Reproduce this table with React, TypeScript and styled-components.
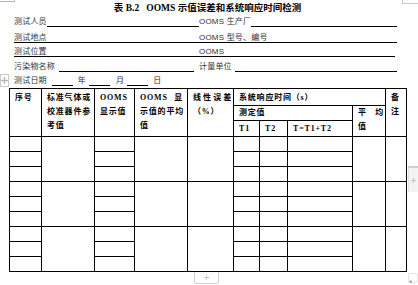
import React from 'react';
import styled, { createGlobalStyle } from 'styled-components';

const GlobalStyle = createGlobalStyle`
  html, body {
    margin: 0;
    padding: 0;
    background: #fff;
  }
  body {
    font-family: "Liberation Serif", "Noto Sans CJK SC", serif;
    color: #000;
    overflow: hidden;
  }
`;

const Page = styled.div`
  position: relative;
  width: 418px;
  height: 285px;
  padding-top: 3px;
  box-sizing: border-box;
  overflow: hidden;
`;

const Title = styled.h1`
  margin: 0;
  padding-right: 3px;
  height: 10px;
  font-size: 9.5px;
  line-height: 10px;
  font-weight: bold;
  text-align: center;
  white-space: pre;
  font-family: "Liberation Serif", "Noto Sans CJK SC", serif;
`;

const Form = styled.div`
  margin-left: 14px;
  display: grid;
  grid-template-columns: 185px 198px;
  grid-template-rows: 14px 16px 14px 15px 14px;
`;

const Field = styled.div<{ $right?: number; $wide?: boolean }>`
  display: flex;
  align-items: flex-end;
  margin-right: ${(p) => p.$right ?? 0}px;
  grid-column: ${(p) => (p.$wide ? '1 / 3' : 'auto')};
`;

const Label = styled.span<{ $lined?: boolean; $gap?: number; $lead?: number }>`
  font-family: "Liberation Sans", "Noto Sans CJK SC", sans-serif;
  font-size: 8px;
  line-height: 9px;
  letter-spacing: 0.2px;
  color: #333;
  white-space: pre;
  margin-left: ${(p) => p.$lead ?? 0}px;
  margin-right: ${(p) => p.$gap ?? 0}px;
  border-bottom: 1px solid ${(p) => (p.$lined ? '#000' : 'transparent')};
`;

const Blank = styled.span<{ $w?: number }>`
  flex: ${(p) => (p.$w ? `0 0 ${p.$w}px` : '1')};
  border-bottom: 1px solid #000;
`;

const Grid = styled.table`
  margin: 2px 0 0 9px;
  border-collapse: collapse;
  table-layout: fixed;
  width: 398px;
`;

const Row = styled.tr<{ $h: number }>`
  height: ${(p) => p.$h}px;
`;

const Cell = styled.td<{ $pt?: number; $pr?: number }>`
  border: 1px solid #000;
  padding: ${(p) => p.$pt ?? 0}px ${(p) => p.$pr ?? 0}px 0 5px;
  vertical-align: top;
  font-size: 8px;
  line-height: 14px;
  font-weight: bold;
  letter-spacing: 0.8px;
  white-space: nowrap;
  overflow: hidden;
`;

const Spread = styled.div`
  display: flex;
  justify-content: space-between;
`;

const Mark = styled.div<{ $x: number; $y: number; $w: number; $h: number }>`
  position: absolute;
  left: ${(p) => p.$x}px;
  top: ${(p) => p.$y}px;
  width: ${(p) => p.$w}px;
  height: ${(p) => p.$h}px;
  box-sizing: border-box;
`;

const CornerLeft = styled(Mark)`
  border-right: 1px solid #b5b5b5;
  border-bottom: 1px solid #b5b5b5;
`;

const CornerRight = styled(Mark)`
  border-left: 1px solid #c8c8c8;
  border-bottom: 1px solid #c8c8c8;
`;

const MoveHandle = styled(Mark)`
  border: 1px solid #c9c9c9;
  background: #fff;
  display: flex;
  align-items: center;
  justify-content: center;
`;

const SideAdd = styled(Mark)`
  background: #f3f3f3;
  border-top: 2px solid #cfcfcf;
  border-left: 1px solid #e4e4e4;
  display: flex;
  align-items: center;
  justify-content: center;
  color: #c0c0c0;
  font: 10px "Liberation Sans", sans-serif;
`;

const BottomAdd = styled(Mark)`
  border: 1px solid #d2d2d2;
  border-top: none;
  border-radius: 0 0 3px 3px;
  display: flex;
  align-items: center;
  justify-content: center;
  color: #c0c0c0;
  font: 10px "Liberation Sans", sans-serif;
`;

const Resize = styled(Mark)`
  border: 1px solid #e6e6e6;
  border-radius: 2px;
`;

const cols = [32, 53, 40, 53, 46, 26, 28, 65, 33, 21];

function BodyGroup() {
  return (
    <>
      <Row $h={15}>
        <Cell />
        <Cell rowSpan={3} />
        <Cell />
        <Cell rowSpan={3} />
        <Cell rowSpan={3} />
        <Cell />
        <Cell />
        <Cell />
        <Cell rowSpan={3} />
        <Cell rowSpan={3} />
      </Row>
      {[0, 1].map((i) => (
        <Row $h={15} key={i}>
          <Cell />
          <Cell />
          <Cell />
          <Cell />
          <Cell />
        </Row>
      ))}
    </>
  );
}

export default function App() {
  return (
    <Page>
      <GlobalStyle />
      <Title>{'表 B.2   OOMS 示值误差和系统响应时间检测'}</Title>

      <Form>
        <Field>
          <Label>测试人员</Label>
          <Blank />
        </Field>
        <Field>
          <Label>OOMS 生产厂</Label>
          <Blank />
        </Field>

        <Field>
          <Label $lined>测试地点</Label>
          <Blank />
        </Field>
        <Field>
          <Label $lined>OOMS 型号、编号</Label>
          <Blank />
        </Field>

        <Field>
          <Label $lined>测试位置</Label>
          <Blank />
        </Field>
        <Field $right={2}>
          <Label $lined>OOMS</Label>
          <Blank />
        </Field>

        <Field $right={5}>
          <Label $gap={4}>污染物名称</Label>
          <Blank />
        </Field>
        <Field>
          <Label $gap={3}>计量单位</Label>
          <Blank />
        </Field>

        <Field $wide>
          <Label $gap={5}>测试日期</Label>
          <Blank $w={21} />
          <Label $lead={5} $gap={3}>年</Label>
          <Blank $w={21} />
          <Label $lead={6} $gap={3}>月</Label>
          <Blank $w={21} />
          <Label $lead={5}>日</Label>
        </Field>
      </Form>

      <Grid>
        <colgroup>
          {cols.map((w, i) => (
            <col key={i} style={{ width: w }} />
          ))}
        </colgroup>
        <tbody>
          <Row $h={17}>
            <Cell rowSpan={3} $pt={2}>序号</Cell>
            <Cell rowSpan={3} $pt={2}>
              标准气体或
              <br />
              校准器件参
              <br />
              考值
            </Cell>
            <Cell rowSpan={3} $pt={2}>
              OOMS
              <br />
              显示值
            </Cell>
            <Cell rowSpan={3} $pt={2} $pr={4}>
              <Spread>
                <span>OOMS</span>
                <span>显</span>
              </Spread>
              示值的平均
              <br />
              值
            </Cell>
            <Cell rowSpan={3} $pt={2} $pr={1}>
              <Spread>
                <span>线</span>
                <span>性</span>
                <span>误</span>
                <span>差</span>
              </Spread>
              （%）
            </Cell>
            <Cell colSpan={4} $pt={2}>系统响应时间（s）</Cell>
            <Cell rowSpan={3} $pt={2}>
              备
              <br />
              注
            </Cell>
          </Row>
          <Row $h={14}>
            <Cell colSpan={3}>测定值</Cell>
            <Cell rowSpan={2} $pr={1}>
              <Spread>
                <span>平</span>
                <span>均</span>
              </Spread>
              值
            </Cell>
          </Row>
          <Row $h={16}>
            <Cell $pt={1}>T1</Cell>
            <Cell $pt={1}>T2</Cell>
            <Cell $pt={1}>T=T1+T2</Cell>
          </Row>
          <BodyGroup />
          <BodyGroup />
          <BodyGroup />
        </tbody>
      </Grid>

      <CornerLeft $x={0} $y={0} $w={15} $h={2} />
      <CornerRight $x={402} $y={0} $w={16} $h={4} />
      <MoveHandle $x={0} $y={74} $w={9} $h={13}>
        <svg width="7" height="7" viewBox="0 0 14 14" fill="none" stroke="#9a9a9a" strokeWidth="1.4">
          <path d="M7 1v12M1 7h12M5 3l2-2 2 2M5 11l2 2 2-2M3 5L1 7l2 2M11 5l2 2-2 2" />
        </svg>
      </MoveHandle>
      <SideAdd $x={408} $y={166} $w={10} $h={26}>+</SideAdd>
      <BottomAdd $x={194} $y={272} $w={25} $h={12}>+</BottomAdd>
      <Resize $x={408} $y={273} $w={10} $h={10}>
        <svg width="8" height="8" viewBox="0 0 8 8" fill="none" stroke="#9a9a9a" strokeWidth="1">
          <path d="M1 1l2 2M1 1h2M1 1v2M7 7L5 5M7 7H5M7 7V5" />
        </svg>
      </Resize>
    </Page>
  );
}
